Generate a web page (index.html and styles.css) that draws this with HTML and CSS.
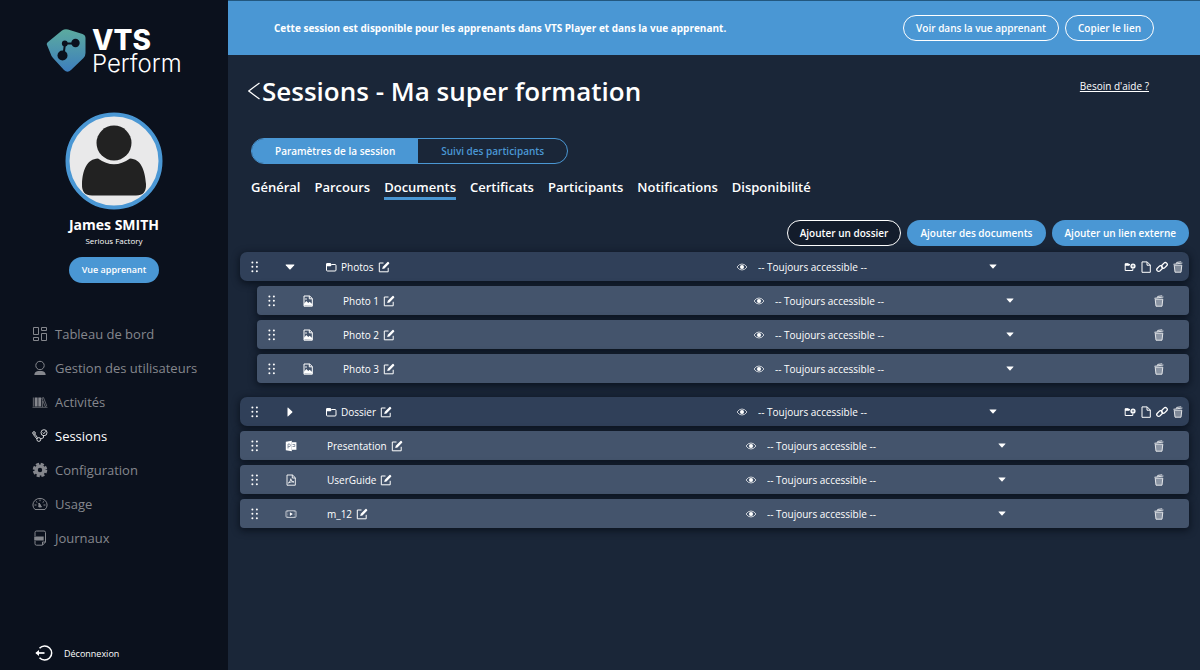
FILE: index.html
```html
<!DOCTYPE html>
<html lang="fr">
<head>
<meta charset="utf-8">
<meta name="viewport" content="width=device-width, initial-scale=1">
<title>VTS Perform - Sessions</title>
<link rel="stylesheet" href="styles.css">
</head>
<body>
<svg class="sprite" aria-hidden="true">
  <symbol id="i-grip" viewBox="0 0 8 12"><g fill="currentColor"><circle cx="1.400" cy="1.500" r="1"/><circle cx="5.900" cy="1.500" r="1"/><circle cx="1.400" cy="5.800" r="1"/><circle cx="5.900" cy="5.800" r="1"/><circle cx="1.400" cy="10.200" r="1"/><circle cx="5.900" cy="10.200" r="1"/></g></symbol>
  <symbol id="i-down" viewBox="0 0 10 6"><path d="M1 .5h8q.8 0 .2.7L5.600 5.200q-.6.6-1.200 0L.8 1.200Q.2.5 1 .5Z" fill="currentColor"/></symbol>
  <symbol id="i-right" viewBox="0 0 6 10"><path d="M.5 1v8q0 .8.7.2l4-3.600q.6-.6 0-1.200L1.200.8Q.5.2.5 1Z" fill="currentColor"/></symbol>
  <symbol id="i-folder" viewBox="0 0 12 12"><path d="M1.500 3v6q0 1 1 1h7.500q1 0 1-1V4.500q0-1-1-1H6.500L5.500 2.500H2q-.5 0-.5.500z" fill="none" stroke="currentColor" stroke-width="1"/><path d="M1.500 2.500h4l1 1.800-.8 1H1.500z" fill="currentColor"/></symbol>
  <symbol id="i-edit" viewBox="0 0 12 12"><path d="M5.500 2H1.300v8.800h8.900V6.800" fill="none" stroke="currentColor" stroke-width="1"/><path d="M4.200 8.100l.6-2.300L9.500 1.100q.5-.5 1 0l.6.6q.5.500 0 1L6.500 7.400z" fill="currentColor"/></symbol>
  <symbol id="i-image" viewBox="0 0 12 12"><path d="M2 1h5.700L10.300 3.500v7.700H2z" fill="none" stroke="currentColor" stroke-width="1"/><path d="M7.300 1v2.800h3" fill="none" stroke="currentColor"/><path d="M2 10.500V8.700l2.300-2.700 2 2 1.300-1.300 2.600 2.400v1.700z" fill="currentColor"/><circle cx="4" cy="4" r=".8" fill="currentColor"/></symbol>
  <symbol id="i-ppt" viewBox="0 0 12 12"><path d="M.8 1.800L6.800.8v10.400l-6-1z" fill="currentColor"/><path d="M7 2.200h4.400v7.600H7" fill="currentColor"/><path d="M3 8.500V4h1.200q1.200.1 1.200 1.400T4 6.700H3M7.500 4.500h2.300v2H7.500" fill="none" stroke="#44546c" stroke-width=".6"/></symbol>
  <symbol id="i-pdf" viewBox="0 0 12 12"><path d="M2 1h5.500l2.800 2.700v7.500H2zM7.300 1v3h3" fill="none" stroke="currentColor" stroke-width=".9"/><path d="M3.300 9q2.500-1.500 2.500-4.300Q5.800 7.500 9 8 6 7.300 3.300 9Z" fill="none" stroke="currentColor" stroke-width=".8"/></symbol>
  <symbol id="i-video" viewBox="0 0 12 12"><rect x="1" y="2.800" width="10" height="6.600" rx="1" fill="none" stroke="currentColor" stroke-width=".7"/><path d="M2.700 3v6M9.300 3v6" stroke="currentColor" stroke-width=".4" stroke-dasharray="1 .6"/><path d="M4.900 4.300l3 1.800-3 1.800z" fill="currentColor"/></symbol>
  <symbol id="i-eye" viewBox="0 0 12 8"><path d="M1 4Q3 1 6 1T11 4Q9 7 6 7T1 4Z" fill="none" stroke="currentColor" stroke-width=".7"/><circle cx="6" cy="4" r="2" fill="currentColor"/></symbol>
  <symbol id="i-folder-add" viewBox="0 0 12 12"><path d="M6 3.500H5L4.300 2.700H1.200v6.800h7.600V7.500" fill="none" stroke="currentColor" stroke-width="1"/><path d="M1 2.800h4.500v2H1z" fill="currentColor"/><circle cx="9" cy="5" r="2.600" fill="currentColor"/><path d="M9 3.800v2.400M7.800 5h2.400" stroke="#304059" stroke-width=".6"/></symbol>
  <symbol id="i-file" viewBox="0 0 12 12"><path d="M2 .9h5.200L10.300 4v7.300H2zM7 .9v3.300h3.300" fill="none" stroke="currentColor" stroke-width="1"/></symbol>
  <symbol id="i-link" viewBox="0 0 12 12"><g fill="none" stroke="currentColor" stroke-width="1.300"><rect x=".4" y="5.700" width="6.400" height="3.800" rx="1.900" transform="rotate(-45 3.600 7.600)"/><rect x="5.200" y="2.500" width="6.400" height="3.800" rx="1.900" transform="rotate(-45 8.400 4.400)"/></g></symbol>
  <symbol id="i-trash" viewBox="0 0 12 12"><g fill="none" stroke="currentColor"><path d="M2.200 4.200l.8 7h6l.8-7z" fill="currentColor" fill-opacity=".45" stroke-width="1"/><path d="M1.400 3.300l9-1.300M4.500 2.600l.2-1.200 4.500-.6" stroke-width="1"/></g></symbol>
</svg>

<div class="app">
  <aside class="sidebar">
    <div class="brand">
      <svg class="brand-mark" viewBox="0 0 40 44" aria-hidden="true">
        <defs><linearGradient id="mark" x1=".5" y1="0" x2=".5" y2="1"><stop offset="0" stop-color="#5cab9f"/><stop offset="1" stop-color="#3d7ebd"/></linearGradient></defs>
        <path d="M2 14L16 2.500q3-2 6-1l14.500 4.500q3 1 3 4v15q0 3-2 5L25 42q-3.500 3.500-7 0L7 30Q5 27.500 4.300 25L1 17q-.8-1.800 1-3Z" fill="url(#mark)"/>
        <path d="M17.500 27L19 15.500h11" fill="none" stroke="#0b111d" stroke-width="2"/>
        <g fill="#0b111d"><circle cx="16.500" cy="27.500" r="5"/><circle cx="18.800" cy="15.500" r="2.900"/><circle cx="29.500" cy="15" r="4.200"/></g>
      </svg>
      <div class="brand-text"><span class="brand-top">VTS</span><span class="brand-bottom">Perform</span></div>
    </div>

    <div class="profile">
      <svg class="avatar" viewBox="0 0 98 98" role="img" aria-label="Avatar">
        <circle cx="49" cy="49" r="46.500" fill="#e9e9ea" stroke="#4a97d4" stroke-width="4"/>
        <circle cx="49" cy="31" r="17.500" fill="#222"/>
        <path d="M33 46.500q16 11.500 32 0C76 47 80 58 81 72q.5 11.500-10 11.500H27Q16.500 83.500 17 72C17.500 58 22 47 33 46.500Z" fill="#222"/>
      </svg>
      <strong class="profile-name">James SMITH</strong>
      <span class="profile-org">Serious Factory</span>
      <button class="btn btn-primary btn-small" type="button">Vue apprenant</button>
    </div>

    <nav class="menu">
      <a href="#"><svg viewBox="0 0 16 16"><g fill="none" stroke="currentColor"><path d="M1.500 1.500h5v7h-5zM9.500 1.500h5v3h-5zM1.500 11.500h5v3h-5zM9.500 7.500h5v7h-5z"/></g></svg>Tableau de bord</a>
      <a href="#"><svg viewBox="0 0 16 16"><circle cx="8" cy="5.500" r="4.200" fill="none" stroke="currentColor"/><path d="M2.300 15q.2-3.500 3.700-4h4q3.500.5 3.700 4z" fill="currentColor"/></svg>Gestion des utilisateurs</a>
      <a href="#"><svg viewBox="0 0 16 16"><path d="M.9 3.500h.7v9H.9zM2.700 3.500h2.900v9H2.700zM6.300 3.500h2.900v9H6.300z" fill="currentColor"/><path d="M9.900 4.200l1.600-.6 3.200 8.200-1.500.7zM10.600 13V7M.5 13.300h15" fill="none" stroke="currentColor" stroke-width=".7"/></svg>Activités</a>
      <a href="#" class="active" aria-current="page"><svg viewBox="0 0 16 16"><g fill="none" stroke="currentColor" stroke-width=".8"><circle cx="2" cy="5" r="1.300"/><circle cx="6.800" cy="11.500" r="1.900"/><circle cx="12" cy="4.700" r="3"/><path d="M3 6.200l2.500 3.500M8.700 11l2.800-1.300V7.700M1.500 6.700L5 11M10.700 4.500l1.100 1.200 2-2.400"/></g></svg>Sessions</a>
      <a href="#"><svg viewBox="0 0 16 16"><circle cx="8" cy="8" r="3.900" fill="none" stroke="currentColor" stroke-width="3.400"/><circle cx="8" cy="8" r="6" fill="none" stroke="currentColor" stroke-width="2.600" stroke-dasharray="3.100 1.610"/></svg>Configuration</a>
      <a href="#"><svg viewBox="0 0 16 16"><path d="M3 13.500Q.9 11.600.9 9a7.100 6.600 0 0114.200 0q0 2.600-2.100 4.500z" fill="none" stroke="currentColor"/><path d="M2.500 9h2M11.500 9h2M4 5.500l1.300 1M12 5.500l-1.300 1M8 3.500v1.700M6.800 7l2 3" fill="none" stroke="currentColor"/><path d="M7 7l2.500 4H6.800z" stroke="currentColor" fill="currentColor" stroke-width=".9"/></svg>Usage</a>
      <a href="#"><svg viewBox="0 0 16 16"><path d="M3 6V2.500q0-1.500 1.500-1.500h7.500q1.500 0 1.500 1.500V12l-3 3.200h-6Q3 15.200 3 13.700V11M10.500 15v-3h3" fill="none" stroke="currentColor"/><path d="M2.200 6.500h9.500v4H2.200z" fill="currentColor"/></svg>Journaux</a>
    </nav>

    <a class="logout" href="#"><svg viewBox="0 0 18 18"><path d="M4.500 4.300a7 7 0 110 9.400" fill="none" stroke="currentColor" stroke-width="1.500"/><path d="M1.500 9h8" stroke="currentColor" stroke-width="1.700"/><path d="M.3 9L4 6v6z" fill="currentColor"/></svg>Déconnexion</a>
  </aside>

  <main class="content">
    <div class="banner">
      <p>Cette session est disponible pour les apprenants dans VTS Player et dans la vue apprenant.</p>
      <div class="banner-actions">
        <button class="btn btn-outline-light" type="button">Voir dans la vue apprenant</button>
        <button class="btn btn-outline-light" type="button">Copier le lien</button>
      </div>
    </div>

    <header class="page-head">
      <a class="back" href="#" aria-label="Retour"><svg viewBox="0 0 12 18"><path d="M11.500 1L.8 9l10.700 8" fill="none" stroke="currentColor" stroke-width="1.200"/></svg></a>
      <h1>Sessions - Ma super formation</h1>
      <a class="help" href="#">Besoin d'aide ?</a>
    </header>

    <div class="switch">
      <button class="switch-item selected" type="button">Paramètres de la session</button>
      <button class="switch-item" type="button">Suivi des participants</button>
    </div>

    <nav class="tabs">
      <a href="#">Général</a>
      <a href="#">Parcours</a>
      <a href="#" class="current" aria-current="page">Documents</a>
      <a href="#">Certificats</a>
      <a href="#">Participants</a>
      <a href="#">Notifications</a>
      <a href="#">Disponibilité</a>
    </nav>

    <section class="documents">
      <div class="toolbar">
        <button class="btn btn-dark" type="button">Ajouter un dossier</button>
        <button class="btn btn-primary" type="button">Ajouter des documents</button>
        <button class="btn btn-primary" type="button">Ajouter un lien externe</button>
      </div>

      <div class="rows">
        <div class="row folder">
          <svg class="grip"><use href="#i-grip"/></svg>
          <button class="toggle" type="button" aria-label="Replier"><svg class="caret"><use href="#i-down"/></svg></button>
          <div class="name"><svg class="icon"><use href="#i-folder"/></svg><span>Photos</span><button type="button" aria-label="Renommer"><svg class="icon"><use href="#i-edit"/></svg></button></div>
          <label class="access"><svg class="eye"><use href="#i-eye"/></svg><select aria-label="Accès à Photos"><option>-- Toujours accessible --</option></select><svg class="select-caret"><use href="#i-down"/></svg></label>
          <div class="actions">
            <button type="button" aria-label="Ajouter un dossier"><svg class="icon"><use href="#i-folder-add"/></svg></button>
            <button type="button" aria-label="Ajouter un document"><svg class="icon"><use href="#i-file"/></svg></button>
            <button type="button" aria-label="Ajouter un lien"><svg class="icon"><use href="#i-link"/></svg></button>
            <button type="button" aria-label="Supprimer" class="trash"><svg class="icon"><use href="#i-trash"/></svg></button>
          </div>
        </div>
        <div class="children">
          <div class="row child">
            <svg class="grip"><use href="#i-grip"/></svg>
            <svg class="icon type"><use href="#i-image"/></svg>
            <div class="name"><span>Photo 1</span><button type="button" aria-label="Renommer"><svg class="icon"><use href="#i-edit"/></svg></button></div>
            <label class="access"><svg class="eye"><use href="#i-eye"/></svg><select aria-label="Accès à Photo 1"><option>-- Toujours accessible --</option></select><svg class="select-caret"><use href="#i-down"/></svg></label>
            <div class="actions"><button type="button" aria-label="Supprimer" class="trash"><svg class="icon"><use href="#i-trash"/></svg></button></div>
          </div>
          <div class="row child">
            <svg class="grip"><use href="#i-grip"/></svg>
            <svg class="icon type"><use href="#i-image"/></svg>
            <div class="name"><span>Photo 2</span><button type="button" aria-label="Renommer"><svg class="icon"><use href="#i-edit"/></svg></button></div>
            <label class="access"><svg class="eye"><use href="#i-eye"/></svg><select aria-label="Accès à Photo 2"><option>-- Toujours accessible --</option></select><svg class="select-caret"><use href="#i-down"/></svg></label>
            <div class="actions"><button type="button" aria-label="Supprimer" class="trash"><svg class="icon"><use href="#i-trash"/></svg></button></div>
          </div>
          <div class="row child">
            <svg class="grip"><use href="#i-grip"/></svg>
            <svg class="icon type"><use href="#i-image"/></svg>
            <div class="name"><span>Photo 3</span><button type="button" aria-label="Renommer"><svg class="icon"><use href="#i-edit"/></svg></button></div>
            <label class="access"><svg class="eye"><use href="#i-eye"/></svg><select aria-label="Accès à Photo 3"><option>-- Toujours accessible --</option></select><svg class="select-caret"><use href="#i-down"/></svg></label>
            <div class="actions"><button type="button" aria-label="Supprimer" class="trash"><svg class="icon"><use href="#i-trash"/></svg></button></div>
          </div>
        </div>
        <div class="row folder">
          <svg class="grip"><use href="#i-grip"/></svg>
          <button class="toggle" type="button" aria-label="Déplier"><svg class="caret closed"><use href="#i-right"/></svg></button>
          <div class="name"><svg class="icon"><use href="#i-folder"/></svg><span>Dossier</span><button type="button" aria-label="Renommer"><svg class="icon"><use href="#i-edit"/></svg></button></div>
          <label class="access"><svg class="eye"><use href="#i-eye"/></svg><select aria-label="Accès à Dossier"><option>-- Toujours accessible --</option></select><svg class="select-caret"><use href="#i-down"/></svg></label>
          <div class="actions">
            <button type="button" aria-label="Ajouter un dossier"><svg class="icon"><use href="#i-folder-add"/></svg></button>
            <button type="button" aria-label="Ajouter un document"><svg class="icon"><use href="#i-file"/></svg></button>
            <button type="button" aria-label="Ajouter un lien"><svg class="icon"><use href="#i-link"/></svg></button>
            <button type="button" aria-label="Supprimer" class="trash"><svg class="icon"><use href="#i-trash"/></svg></button>
          </div>
        </div>
        <div class="row">
          <svg class="grip"><use href="#i-grip"/></svg>
          <svg class="icon type"><use href="#i-ppt"/></svg>
          <div class="name"><span>Presentation</span><button type="button" aria-label="Renommer"><svg class="icon"><use href="#i-edit"/></svg></button></div>
          <label class="access"><svg class="eye"><use href="#i-eye"/></svg><select aria-label="Accès à Presentation"><option>-- Toujours accessible --</option></select><svg class="select-caret"><use href="#i-down"/></svg></label>
          <div class="actions"><button type="button" aria-label="Supprimer" class="trash"><svg class="icon"><use href="#i-trash"/></svg></button></div>
        </div>
        <div class="row">
          <svg class="grip"><use href="#i-grip"/></svg>
          <svg class="icon type"><use href="#i-pdf"/></svg>
          <div class="name"><span>UserGuide</span><button type="button" aria-label="Renommer"><svg class="icon"><use href="#i-edit"/></svg></button></div>
          <label class="access"><svg class="eye"><use href="#i-eye"/></svg><select aria-label="Accès à UserGuide"><option>-- Toujours accessible --</option></select><svg class="select-caret"><use href="#i-down"/></svg></label>
          <div class="actions"><button type="button" aria-label="Supprimer" class="trash"><svg class="icon"><use href="#i-trash"/></svg></button></div>
        </div>
        <div class="row">
          <svg class="grip"><use href="#i-grip"/></svg>
          <svg class="icon type"><use href="#i-video"/></svg>
          <div class="name"><span>m_12</span><button type="button" aria-label="Renommer"><svg class="icon"><use href="#i-edit"/></svg></button></div>
          <label class="access"><svg class="eye"><use href="#i-eye"/></svg><select aria-label="Accès à m_12"><option>-- Toujours accessible --</option></select><svg class="select-caret"><use href="#i-down"/></svg></label>
          <div class="actions"><button type="button" aria-label="Supprimer" class="trash"><svg class="icon"><use href="#i-trash"/></svg></button></div>
        </div>
      </div>
    </section>
  </main>
</div>
</body>
</html>
```

FILE: styles.css
```css
* { box-sizing: border-box; }

:root {
  --blue: #4a97d4;
  --night: #0b111d;
  --panel: #1a2638;
  --folder: #304059;
  --file: #44546c;
}

body {
  margin: 0;
  background: var(--panel);
  color: #fff;
  font-family: "Open Sans", "Noto Sans", sans-serif;
  font-size: 10px;
}

a { color: inherit; text-decoration: none; }
button { font: inherit; color: inherit; background: none; border: 0; padding: 0; cursor: pointer; }
svg { display: block; flex: none; }
.sprite { display: none; }

.app { display: grid; grid-template-columns: 228px 1fr; min-height: 100vh; }

/* Sidebar */
.sidebar { display: flex; flex-direction: column; background: var(--night); padding-bottom: 7px; }

.brand { display: flex; gap: 6px; padding: 28px 0 0 46px; }
.brand-mark { width: 40px; height: 44px; }
.brand-text { display: flex; flex-direction: column; font-family: Inter, sans-serif; }
.brand-top { font-size: 28px; line-height: 24px; font-weight: 800; }
.brand-bottom { font-size: 24px; line-height: 24px; font-weight: 300; }

.profile { display: flex; flex-direction: column; align-items: center; padding-top: 36px; }
.avatar { width: 98px; height: 98px; }
.profile-name { margin-top: 5px; font-size: 14px; line-height: 20px; font-weight: 700; }
.profile-org { font-size: 8px; line-height: 12px; margin-bottom: 10px; }

.menu { display: flex; flex-direction: column; padding: 34px 0 0 32px; }
.menu a { display: flex; align-items: center; gap: 7px; height: 34px; font-size: 13px; color: #85878d; }
.menu svg { width: 16px; height: 16px; }
.menu .active { color: #fff; font-weight: 500; }

.logout { display: flex; align-items: center; gap: 11px; margin-top: auto; padding-left: 35px; height: 20px; font-size: 9px; font-weight: 500; }
.logout svg { width: 18px; height: 18px; }

/* Buttons */
.btn { height: 26px; padding: 0 12px; border: 1px solid transparent; border-radius: 13px; font-size: 10px; font-weight: 600; line-height: 16px; white-space: nowrap; }
.btn-primary { background: var(--blue); }
.btn-small { font-size: 9px; }
.btn-outline-light { border-color: #fff; }
.btn-dark { border-color: #fff; background: #131c2b; }

/* Main area */
.banner { display: flex; align-items: center; justify-content: space-between; height: 55px; padding: 0 46px; border-top: 1px solid #22577f; background: var(--blue); }
.banner p { margin: 0; font-weight: 700; }
.banner-actions { display: flex; gap: 6px; }

.page-head { display: flex; align-items: center; gap: 2px; padding: 18px 51px 0 20px; }
.back svg { width: 12px; height: 18px; }
.page-head h1 { flex: 1; margin: 0; font-size: 26px; line-height: 36px; font-weight: 600; }
.help { align-self: flex-start; margin-top: 5px; line-height: 16px; text-decoration: underline; }

.switch { display: flex; width: fit-content; height: 26px; margin: 29px 0 0 23px; border: 1px solid var(--blue); border-radius: 13px; overflow: hidden; }
.switch-item { padding: 0 23px; font-weight: 600; color: var(--blue); }
.switch-item.selected { background: var(--blue); color: #fff; }

.tabs { display: flex; gap: 14px; margin: 13px 0 0 23px; font-size: 13px; line-height: 20px; font-weight: 600; }
.tabs a { border-bottom: 3px solid transparent; }
.tabs .current { border-color: var(--blue); }

/* Document list */
.documents { padding: 20px 11px 0 12px; }
.toolbar { display: flex; justify-content: flex-end; gap: 6px; margin-bottom: 6px; }

.rows, .children { display: flex; flex-direction: column; gap: 5px; }
.children { margin: 0 0 9px 17px; }

.row {
  --end: 183px;
  display: grid;
  grid-template-columns: 35px 52px 1fr 261px var(--end);
  align-items: center;
  height: 29px;
  border-radius: 4px;
  background: var(--file);
  box-shadow: 0 2px 7px 1px rgba(4, 10, 20, .65);
}
.row.folder { --end: 192px; border-radius: 7px; background: var(--folder); }
.row.child { --end: 175px; }

.icon { width: 12px; height: 12px; }
.grip { width: 8px; height: 12px; margin-left: 11px; }
.toggle { display: flex; width: 30px; justify-content: center; }
.row .type { margin-left: 10px; }
.caret { width: 10px; height: 6px; }
.caret.closed { width: 6px; height: 10px; }
.name { display: flex; align-items: center; gap: 4px; font-weight: 500; }
.folder .name { margin-left: -2px; }
.child .name { margin-left: -1px; }

.access { display: grid; grid-template-columns: 22px 1fr; align-items: center; }
.eye { width: 12px; height: 8px; }
.access select { grid-area: 1 / 2; appearance: none; border: 0; margin: 0; padding: 0; background: none; color: #fff; font: inherit; line-height: 16px; }
.select-caret { grid-area: 1 / 2; justify-self: end; width: 8px; height: 5px; pointer-events: none; }

.actions { display: flex; justify-content: flex-end; gap: 4px; padding-right: 24px; }
.folder .actions { padding-right: 5px; }
.trash { opacity: .85; }
```
